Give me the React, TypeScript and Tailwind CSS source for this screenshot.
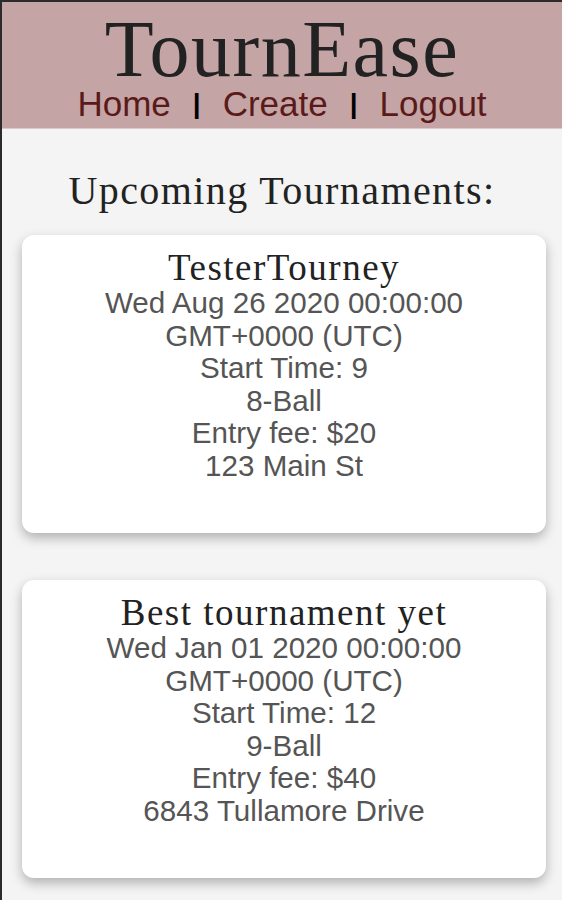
const tournaments = [
  {
    id: 1,
    name: "TesterTourney",
    date: "Wed Aug 26 2020 00:00:00 GMT+0000 (UTC)",
    startTime: 9,
    game: "8-Ball",
    fee: 20,
    location: "123 Main St",
  },
  {
    id: 2,
    name: "Best tournament yet",
    date: "Wed Jan 01 2020 00:00:00 GMT+0000 (UTC)",
    startTime: 12,
    game: "9-Ball",
    fee: 40,
    location: "6843 Tullamore Drive",
  },
];

const serif = "font-['Liberation_Serif',serif]";
const sans = "font-['Liberation_Sans',Arial,sans-serif]";

const App = () => {
  return (
    <div className="min-h-[900px] bg-[#f4f4f4] border-t-2 border-l-2 border-[#2b2b2b]">
      {/* Header */}
      <header className="bg-[#c4a4a4] border-b border-[#dccaca] h-[127px] flex flex-col items-center">
        <h1 className={`${serif} text-[80px] leading-[74px] tracking-[1.5px] text-[#222] mt-[10px]`}>TournEase</h1>
        <nav className={`${sans} text-[35px] leading-[36px] flex items-center gap-[22px]`}>
          <a className="text-[#5a1a1a]">Home</a>
          <span className="text-black text-[28px] leading-[36px] font-bold">|</span>
          <a className="text-[#5a1a1a]">Create</a>
          <span className="text-black text-[28px] leading-[36px] font-bold">|</span>
          <a className="text-[#5a1a1a]">Logout</a>
        </nav>
      </header>

      {/* Main Content */}
      <main className="pb-6">
        <h2 className={`${serif} text-[40px] text-[#222] text-center mt-[42px] leading-none tracking-[1.4px]`}>
          Upcoming Tournaments:
        </h2>

        <div className="mt-[24px] ml-[20px] mr-[16px] flex flex-col gap-[47px]">
          {tournaments.map((t) => (
            <div
              key={t.id}
              className="bg-white rounded-[12px] shadow-[0_5px_12px_rgba(0,0,0,0.28)] h-[298px] pt-[14px] px-4 text-center"
            >
              <h3 className={`${serif} text-[37px] leading-[38px] tracking-[1.5px] text-[#222]`}>{t.name}</h3>
              <div className={`${sans} text-[29.6px] leading-[32.6px] text-[#555] px-[56px]`}>
                <p>{t.date}</p>
                <p>Start Time: {t.startTime}</p>
                <p>{t.game}</p>
                <p>Entry fee: ${t.fee}</p>
                <p>{t.location}</p>
              </div>
            </div>
          ))}
        </div>
      </main>
    </div>
  );
};

export default App;
